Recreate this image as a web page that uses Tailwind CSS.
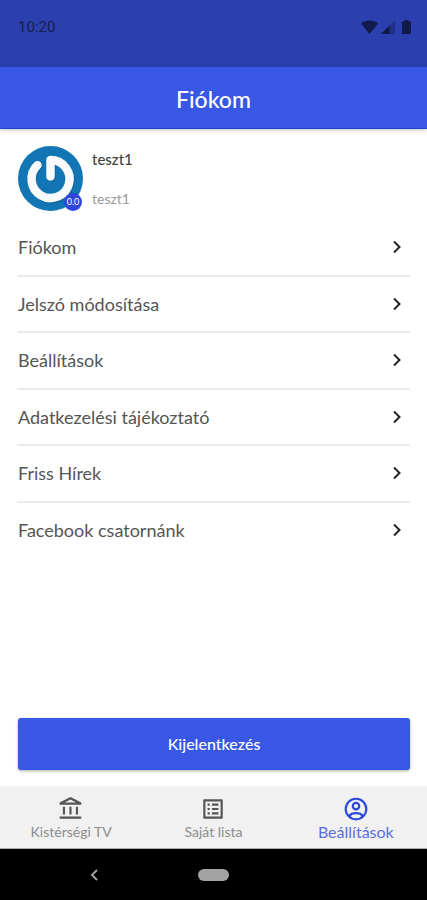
<!DOCTYPE html>
<html lang="hu">
<head>
<meta charset="utf-8">
<meta name="viewport" content="width=device-width, initial-scale=1">
<title>Fiókom</title>
<script src="https://cdn.jsdelivr.net/npm/@tailwindcss/browser@4"></script>
</head>
<body class="flex min-h-screen flex-col bg-white font-['Lato','Open_Sans',sans-serif] text-[#555]">
  <div class="flex h-[67px] items-start justify-between bg-[#2b3fae] pt-[17px] pr-4 pl-[18px] font-[Roboto,sans-serif] text-[#16214f]">
    <span class="text-[15px] leading-5">10:20</span>
    <div class="flex h-5 items-center gap-[3px] text-[#101b4c]">
      <svg class="h-[14px] w-[17px]" viewBox="0 0 17 14" fill="currentColor"><path d="M0 3.4C4.600-.4 12.400-.4 17 3.400L8.500 14Z"/></svg>
      <svg class="h-[14px] w-[14px]" viewBox="0 0 14 14" fill="currentColor"><path d="M14 0V14H0Z" opacity=".4"/><path d="M8.500 5.500V14H0Z"/></svg>
      <svg class="ml-1 h-[14px] w-[9px]" viewBox="0 0 9 14" fill="currentColor"><path d="M2.500 0h4v1.300H8a1 1 0 0 1 1 1V13a1 1 0 0 1-1 1H1a1 1 0 0 1-1-1V2.300a1 1 0 0 1 1-1h1.500Z"/></svg>
    </div>
  </div>

  <header class="z-10 flex h-[62px] items-center justify-center border-b border-[#2443cf] bg-[#3757e4] shadow-[0_1px_4px_rgba(0,0,0,0.25)]">
    <h1 class="pt-0.5 text-[23px] leading-7 font-medium text-white">Fiókom</h1>
  </header>

  <main class="flex flex-1 flex-col px-[17px] pt-[17px] pb-4">
    <section class="flex gap-[9px] pl-px">
      <div class="relative size-[65px] shrink-0">
        <svg class="size-full" viewBox="0 0 65 65" fill="none" role="img" aria-label="Profilkép">
          <circle cx="32.500" cy="32.500" r="32.500" fill="#1276b5"/>
          <g stroke-linecap="round" stroke-linejoin="round">
            <path d="M19.500 19.200A19 19 0 1 0 32.500 14V30.500" transform="translate(1 1.300)" stroke="#0b5688" stroke-opacity=".5" stroke-width="8.500"/>
            <path d="M19.500 19.200A19 19 0 1 0 32.500 14V30.500" stroke="#f9fafb" stroke-width="8.500"/>
          </g>
        </svg>
        <span class="absolute right-px bottom-0 flex size-[18px] items-center justify-center rounded-full bg-[#3044e0] text-[9px] leading-3 text-white">0.0</span>
      </div>
      <div class="flex flex-col pt-[3px]">
        <span class="text-[15px] leading-5 font-medium text-[#444]">teszt1</span>
        <span class="mt-5 text-[14px] leading-5 text-[#999]">teszt1</span>
      </div>
    </section>

    <nav aria-label="Fiók" class="mt-[9px]">
      <ul class="flex min-h-[337px] flex-col divide-y-2 divide-[#ebebeb] text-[18px] leading-6">
        <li class="flex flex-1"><a href="#fiokom" class="flex flex-1 items-center justify-between pr-[7px] pl-px">Fiókom
          <svg class="size-3" viewBox="0 0 12 12" fill="none" stroke="#222" stroke-width="2"><path d="M3 .5 8.500 6 3 11.500"/></svg></a></li>
        <li class="flex flex-1"><a href="#jelszo" class="flex flex-1 items-center justify-between pr-[7px] pl-px">Jelszó módosítása
          <svg class="size-3" viewBox="0 0 12 12" fill="none" stroke="#222" stroke-width="2"><path d="M3 .5 8.500 6 3 11.500"/></svg></a></li>
        <li class="flex flex-1"><a href="#beallitasok" class="flex flex-1 items-center justify-between pr-[7px] pl-px">Beállítások
          <svg class="size-3" viewBox="0 0 12 12" fill="none" stroke="#222" stroke-width="2"><path d="M3 .5 8.500 6 3 11.500"/></svg></a></li>
        <li class="flex flex-1"><a href="#adatkezeles" class="flex flex-1 items-center justify-between pr-[7px] pl-px">Adatkezelési tájékoztató
          <svg class="size-3" viewBox="0 0 12 12" fill="none" stroke="#222" stroke-width="2"><path d="M3 .5 8.500 6 3 11.500"/></svg></a></li>
        <li class="flex flex-1"><a href="#hirek" class="flex flex-1 items-center justify-between pr-[7px] pl-px">Friss Hírek
          <svg class="size-3" viewBox="0 0 12 12" fill="none" stroke="#222" stroke-width="2"><path d="M3 .5 8.500 6 3 11.500"/></svg></a></li>
        <li class="flex flex-1"><a href="#facebook" class="flex flex-1 items-center justify-between pr-[7px] pl-px">Facebook csatornánk
          <svg class="size-3" viewBox="0 0 12 12" fill="none" stroke="#222" stroke-width="2"><path d="M3 .5 8.500 6 3 11.500"/></svg></a></li>
      </ul>
    </nav>

    <button type="button" class="ml-px mt-auto h-[52px] rounded-[3px] bg-[#3757e4] text-[16px] leading-5 font-medium text-white shadow-[0_1px_3px_rgba(0,0,0,0.35)]">Kijelentkezés</button>
  </main>

  <nav aria-label="Fő menü" class="grid h-[63px] grid-cols-3 border-b border-[#aaa] bg-[#f1f1f1] text-[14px] leading-5 text-[#8c8c8c]">
    <a href="#tv" class="flex flex-col items-center pt-[10px]">
      <svg class="size-[26px]" viewBox="0 0 24 24" fill="#555"><path d="M6.500 10h-2v7h2zm6 0h-2v7h2zm9 9h-20v2h20zm-3-9h-2v7h2zM11.500 3.260 16.710 6H6.290zM11.500 1 1.500 6v2h20V6z"/></svg>
      <span>Kistérségi TV</span>
    </a>
    <a href="#lista" class="flex flex-col items-center pt-[10px]">
      <svg class="size-[26px]" viewBox="0 0 24 24" fill="#555"><path d="M19 5v14H5V5zm1.100-2H3.900c-.5 0-.9.400-.9.900v16.200c0 .4.400.9.900.900h16.200c.4 0 .9-.5.900-.9V3.900c0-.5-.5-.9-.9-.9M11 7h6v2h-6zm0 4h6v2h-6zm0 4h6v2h-6zM7 7h2v2H7zm0 4h2v2H7zm0 4h2v2H7z"/></svg>
      <span>Saját lista</span>
    </a>
    <a href="#profil" aria-current="page" class="flex flex-col items-center pt-[10px] text-[16px] leading-5 text-[#5a70e0]">
      <svg class="size-[26px]" viewBox="0 0 24 24" fill="none" stroke="#2c49d8" stroke-width="2"><circle cx="12" cy="12" r="9.500"/><circle cx="12" cy="9.300" r="3"/><path d="M5.800 18.300C7.200 16.400 9.500 15.800 12 15.800s4.800.6 6.200 2.500"/></svg>
      <span>Beállítások</span>
    </a>
  </nav>

  <div class="grid h-[51px] grid-cols-3 items-center bg-black">
    <button type="button" aria-label="Vissza" class="flex h-full items-center justify-center pl-[45px]">
      <svg class="h-3 w-2" viewBox="0 0 8 12" fill="none" stroke="#a0a0a0" stroke-width="2"><path d="M7 1 2 6l5 5"/></svg>
    </button>
    <button type="button" aria-label="Kezdőképernyő" class="flex h-full items-center justify-center"><span class="h-3 w-[31px] rounded-full bg-[#a3a3a3]"></span></button>
  </div>
</body>
</html>
